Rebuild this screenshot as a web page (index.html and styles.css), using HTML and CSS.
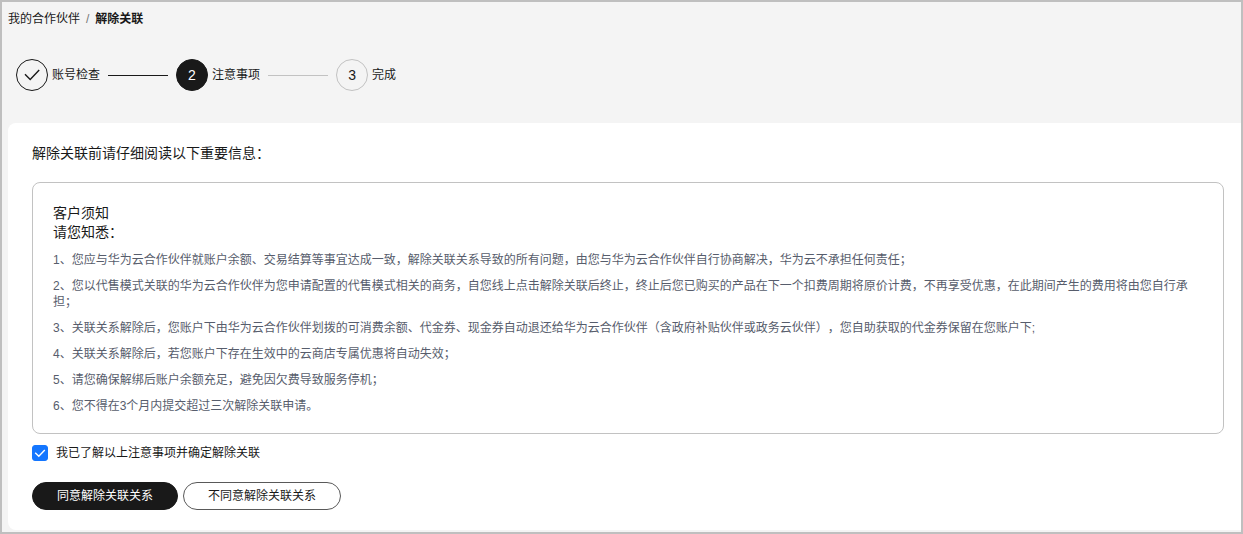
FILE: index.html
```html
<!DOCTYPE html>
<html lang="zh-CN">
<head>
<meta charset="utf-8">
<meta name="viewport" content="width=device-width, initial-scale=1">
<title>解除关联</title>
<link rel="stylesheet" href="styles.css">
</head>
<body>
<div class="page">
  <nav class="breadcrumb" aria-label="面包屑">
    <a class="breadcrumb-link" href="#">我的合作伙伴</a>
    <span class="breadcrumb-separator">/</span>
    <span class="breadcrumb-current" aria-current="page">解除关联</span>
  </nav>

  <ol class="steps">
    <li class="step step-done">
      <span class="step-icon">
        <svg width="16" height="12" viewBox="0 0 16 12" fill="none" stroke="currentColor" stroke-width="1.4" aria-hidden="true"><path d="M1 5.2 6.2 10.4 15.2 1"/></svg>
      </span>
      <span class="step-label">账号检查</span>
    </li>
    <li class="step step-active" aria-current="step">
      <span class="step-icon">2</span>
      <span class="step-label">注意事项</span>
    </li>
    <li class="step">
      <span class="step-icon">3</span>
      <span class="step-label">完成</span>
    </li>
  </ol>

  <main class="card">
    <h1 class="card-title">解除关联前请仔细阅读以下重要信息：</h1>
    <section class="notice">
      <h2 class="notice-heading">客户须知<br>请您知悉：</h2>
      <p class="notice-item">1、您应与华为云合作伙伴就账户余额、交易结算等事宜达成一致，解除关联关系导致的所有问题，由您与华为云合作伙伴自行协商解决，华为云不承担任何责任；</p>
      <p class="notice-item">2、您以代售模式关联的华为云合作伙伴为您申请配置的代售模式相关的商务，自您线上点击解除关联后终止，终止后您已购买的产品在下一个扣费周期将原价计费，不再享受优惠，在此期间产生的费用将由您自行承担；</p>
      <p class="notice-item">3、关联关系解除后，您账户下由华为云合作伙伴划拨的可消费余额、代金券、现金券自动退还给华为云合作伙伴（含政府补贴伙伴或政务云伙伴），您自助获取的代金券保留在您账户下;</p>
      <p class="notice-item">4、关联关系解除后，若您账户下存在生效中的云商店专属优惠将自动失效；</p>
      <p class="notice-item">5、请您确保解绑后账户余额充足，避免因欠费导致服务停机；</p>
      <p class="notice-item">6、您不得在3个月内提交超过三次解除关联申请。</p>
    </section>
    <label class="consent" for="consent">
      <span class="checkbox">
        <input class="checkbox-input" type="checkbox" id="consent" checked>
        <svg class="checkbox-mark" width="16" height="16" viewBox="0 0 16 16" fill="none" stroke="currentColor" stroke-width="1.4" aria-hidden="true"><path d="M3.2 7.7 6.8 11.2 12.8 5"/></svg>
      </span>
      <span>我已了解以上注意事项并确定解除关联</span>
    </label>
    <div class="actions">
      <button class="button button-primary" type="button">同意解除关联关系</button>
      <button class="button" type="button">不同意解除关联关系</button>
    </div>
  </main>
</div>
</body>
</html>
```

FILE: styles.css
```css
* {
  box-sizing: border-box;
}

body {
  margin: 0;
  color: #191919;
  font: 12px/16px "Liberation Sans", "Noto Sans CJK SC", sans-serif;
  text-spacing-trim: space-all;
}

.page {
  min-height: 100vh;
  padding: 9px 0 2px 6px;
  border: 2px solid #bfbfbf;
  background: #f4f4f4;
}

.breadcrumb {
  display: flex;
  gap: 6px;
}

.breadcrumb-link {
  color: inherit;
  text-decoration: none;
}

.breadcrumb-separator {
  color: #777;
}

.breadcrumb-current {
  font-weight: bold;
}

.steps {
  display: flex;
  margin: 32px 0;
  padding: 0 8px;
  list-style: none;
}

.step {
  display: flex;
  align-items: center;
  gap: 4px;
}

.step:not(:last-child)::after {
  width: 60px;
  height: 1px;
  margin: 0 8px 0 4px;
  background: #c2c2c2;
  content: "";
}

.step-done:not(:last-child)::after {
  background: #191919;
}

.step-icon {
  display: flex;
  align-items: center;
  justify-content: center;
  width: 32px;
  height: 32px;
  border: 1px solid #c2c2c2;
  border-radius: 50%;
  font-size: 14px;
}

.step-done .step-icon {
  border-color: #191919;
}

.step-active .step-icon {
  border-color: #191919;
  background: #191919;
  color: #fff;
}

.card {
  padding: 21px 17px 20px 24px;
  border-radius: 8px 0 0 8px;
  background: #fff;
}

.card-title,
.notice-heading {
  margin: 0;
  font-size: 14px;
  font-weight: normal;
  line-height: 19px;
}

.notice {
  margin-top: 19px;
  padding: 21px 20px 19px;
  border: 1px solid #c2c2c2;
  border-radius: 8px;
}

.notice-item {
  margin: 10px 0 0;
  color: #575d6c;
}

.consent {
  display: flex;
  gap: 8px;
  width: fit-content;
  margin-top: 11px;
}

.checkbox {
  display: grid;
  color: #fff;
}

.checkbox-input,
.checkbox-mark {
  grid-area: 1 / 1;
}

.checkbox-input {
  width: 16px;
  height: 16px;
  margin: 0;
  border: 1px solid #c2c2c2;
  border-radius: 3px;
  appearance: none;
}

.checkbox-input:checked {
  border-color: #1476ff;
  background: #1476ff;
}

.checkbox-mark {
  pointer-events: none;
}

.actions {
  display: flex;
  flex-wrap: wrap;
  gap: 5px;
  margin-top: 21px;
}

.button {
  height: 28px;
  padding: 0 24px;
  border: 1px solid #595959;
  border-radius: 14px;
  background: #fff;
  color: #191919;
  font: inherit;
}

.button-primary {
  border-color: #191919;
  background: #191919;
  color: #fff;
}
```
